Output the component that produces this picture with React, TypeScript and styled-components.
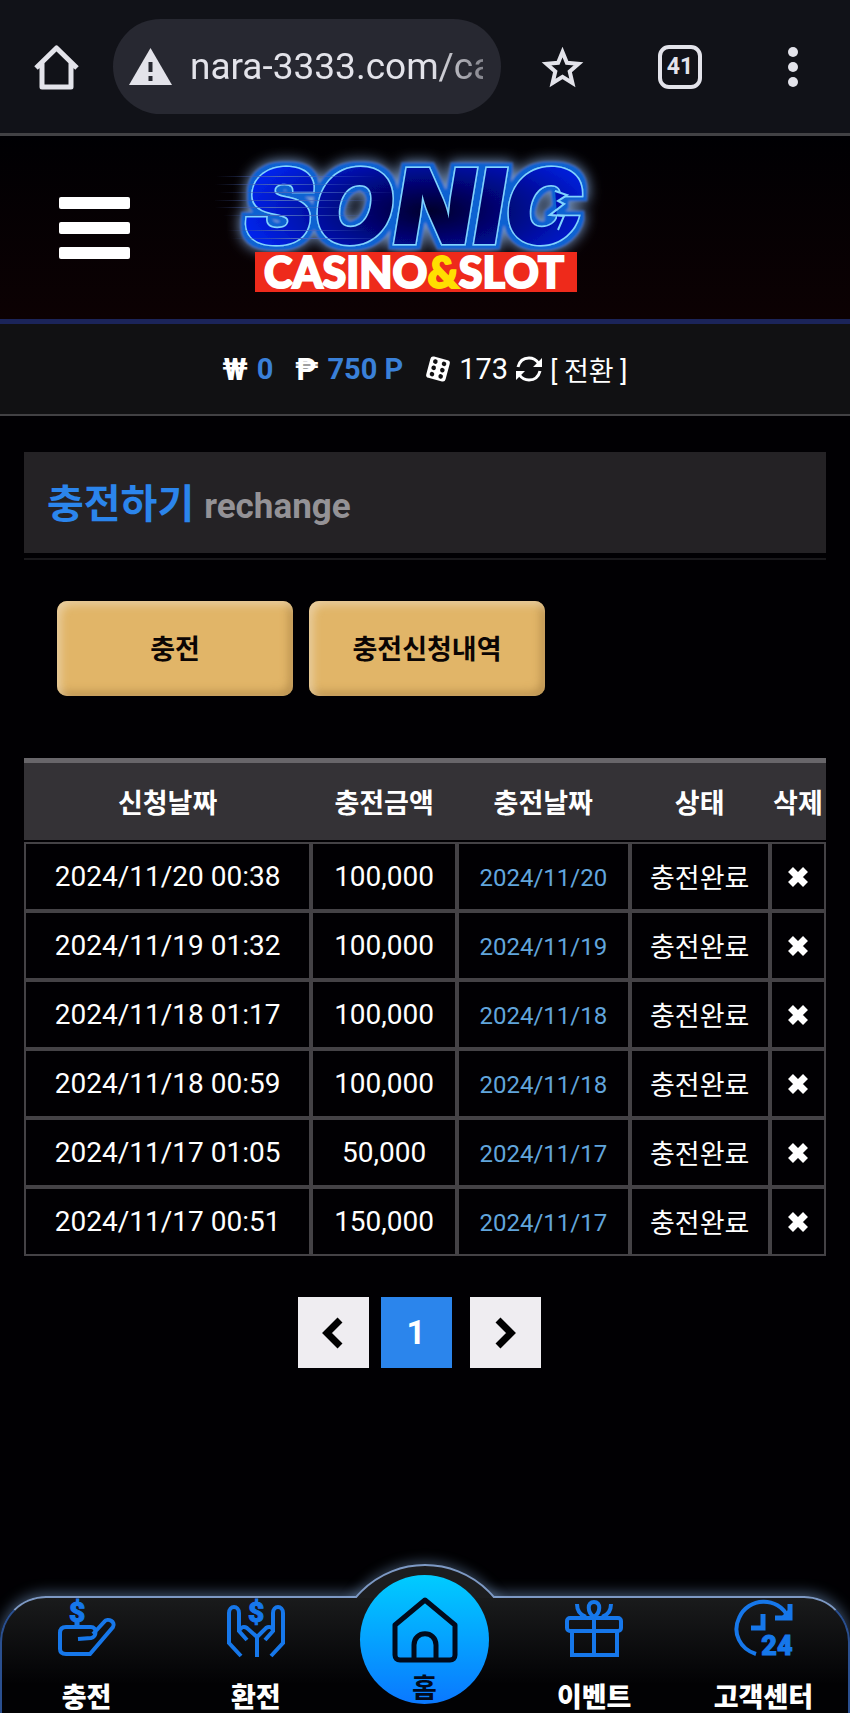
import React from 'react'
import styled, { createGlobalStyle } from 'styled-components'

const colors = {
  accent: '#2b85ec',
  icon: '#1677ea',
  border: '#444246',
  gold: '#e1b568',
  chrome: '#e3e3ea',
}

const GlobalStyle = createGlobalStyle`
  * {
    box-sizing: border-box;
  }
  body {
    margin: 0;
    background: #010003;
    color: #fff;
    font-family: Roboto, "Noto Sans CJK KR", sans-serif;
  }
  button, input {
    font-family: inherit;
    color: inherit;
    border: 0;
    padding: 0;
    background: none;
  }
  a {
    color: inherit;
    text-decoration: none;
  }
  svg {
    flex-shrink: 0;
  }
`

const Page = styled.div`
  display: flex;
  flex-direction: column;
  min-height: 100vh;
`

const IconButton = styled.button`
  display: flex;
  align-items: center;
  justify-content: center;
`

// browser bar

const BrowserBar = styled.div`
  display: flex;
  align-items: center;
  height: 136px;
  padding: 0 40px 0 34px;
  background: #111218;
  border-bottom: 3px solid #424245;
`

const AddressBox = styled.label`
  display: flex;
  align-items: center;
  gap: 18px;
  flex: 0 1 388px;
  min-width: 0;
  height: 95px;
  margin-left: 34px;
  padding: 0 18px 0 16px;
  border-radius: 48px;
  background: #272831;
`

const AddressInput = styled.input`
  flex: 1;
  width: 100%;
  min-width: 0;
  height: 50px;
  color: ${colors.chrome};
  font-size: 37px;
  mask-image: linear-gradient(to right, #000 82%, rgba(0, 0, 0, 0.5));
`

const BrowserActions = styled.div`
  display: flex;
  flex: 1;
  align-items: center;
  justify-content: space-between;
  padding-left: 40px;
`

const TabCount = styled.button`
  width: 44px;
  height: 44px;
  border: 4px solid ${colors.chrome};
  border-radius: 11px;
  color: ${colors.chrome};
  font-size: 23px;
  font-weight: 700;
`

// site header

const Header = styled.header`
  display: grid;
  grid-template-columns: 1fr auto 1fr;
  align-items: center;
  height: 188px;
  padding: 0 59px;
  background: linear-gradient(#000003, #0c0103);
  border-bottom: 5px solid #1b2459;
`

const MenuButton = styled.button`
  display: flex;
  flex-direction: column;
  gap: 13px;
  width: 71px;
`

const MenuBar = styled.span`
  display: block;
  width: 100%;
  height: 12px;
  border-radius: 2px;
  background: #fff;
`

const LogoLink = styled.a`
  display: block;
  height: 174px;
`

// balance bar

const BalanceBar = styled.div`
  display: flex;
  align-items: center;
  justify-content: center;
  height: 92px;
  background: #111113;
  border-bottom: 2px solid #424144;
  font-size: 29px;
`

const Balance = styled.span`
  display: flex;
  align-items: center;
  gap: 9px;
  margin-right: 22px;
`

const Currency = styled.span`
  font-weight: 700;
  font-size: 31px;
`

const Amount = styled.strong`
  color: #3a80d8;
`

const ConvertButton = styled.button`
  display: flex;
  align-items: center;
  gap: 8px;
  font-size: 27px;
`

const Count = styled.span`
  font-size: 29px;
`

// content

const Content = styled.main`
  padding: 36px 24px 0;
`

const TitleBar = styled.div`
  padding-bottom: 5px;
  border-bottom: 2px solid #19181b;
`

const Title = styled.h1`
  display: flex;
  align-items: baseline;
  gap: 10px;
  height: 101px;
  margin: 0;
  padding: 0 23px;
  background: #242225;
  color: ${colors.accent};
  font-size: 40px;
  line-height: 106px;
`

const SubTitle = styled.small`
  color: #949296;
  font-size: 35px;
`

const ButtonRow = styled.div`
  display: flex;
  gap: 16px;
  padding: 41px 33px 62px;
`

const GoldButton = styled.button`
  width: 236px;
  height: 95px;
  padding-bottom: 3px;
  border-radius: 10px;
  background: ${colors.gold};
  box-shadow: inset 4px 4px 8px rgba(236, 214, 175, 0.8), inset -4px -4px 8px rgba(160, 120, 60, 0.6);
  color: #0b0504;
  font-size: 27px;
  font-weight: 700;
`

const Table = styled.table`
  width: 100%;
  table-layout: fixed;
  border-collapse: separate;
  border-spacing: 0;
  text-align: center;
`

const HeadCell = styled.th<{ $width: string }>`
  width: ${({ $width }) => $width};
  height: 84px;
  padding: 0;
  background: #343236;
  border-top: 5px solid #68666a;
  border-bottom: 2px solid #010003;
  font-size: 27px;
  white-space: nowrap;
`

const Cell = styled.td`
  height: 69px;
  padding: 0;
  border: 2px solid ${colors.border};
  font-size: 28px;
`

const ChargedDate = styled.span`
  color: #61a5dc;
  font-size: 24px;
`

const Status = styled.span`
  font-size: 27px;
`

const DeleteButton = styled(IconButton)`
  margin: 0 auto;
`

const Pagination = styled.nav`
  display: flex;
  justify-content: center;
  gap: 12px;
  padding: 41px 12px 0 0;
`

const PageButton = styled.button<{ $active?: boolean }>`
  display: flex;
  align-items: center;
  justify-content: center;
  width: 71px;
  height: 71px;
  background: ${({ $active }) => ($active ? colors.accent : '#efedf1')};
  color: ${({ $active }) => ($active ? '#fff' : '#000')};
  font-size: 33px;
  font-weight: 700;
  &:last-child {
    margin-left: 6px;
  }
`

// bottom menu

const BottomNav = styled.nav`
  position: relative;
  display: grid;
  grid-template-columns: repeat(5, 1fr);
  height: 117px;
  margin-top: auto;
  border: 2px solid #7d99c4;
  border-color: #7d99c4 #2a4f8f;
  border-bottom: 0;
  border-radius: 46px 46px 0 0;
  background: linear-gradient(#1a1b1c, #020204 75%);
  box-shadow: 0 -3px 14px rgba(140, 180, 230, 0.45);
`

const Bulge = styled.div`
  position: absolute;
  top: -34px;
  left: 50%;
  width: 182px;
  height: 182px;
  margin-left: -91px;
  border: 2px solid #7d99c4;
  border-radius: 50%;
  background: #1c1d1f;
  box-shadow: 0 -3px 12px rgba(140, 180, 230, 0.35);
  clip-path: inset(-20px 0 148px 0);
`

const NavItem = styled.a`
  display: flex;
  flex-direction: column;
  align-items: center;
  gap: 17px;
  color: ${colors.icon};

  svg {
    margin-top: -3px;
  }
`

const NavLabel = styled.span`
  color: #fff;
  font-size: 27px;
  font-weight: 900;
  line-height: 40px;
  white-space: nowrap;
`

const HomeItem = styled.a`
  position: absolute;
  top: -23px;
  left: 50%;
  display: flex;
  flex-direction: column;
  align-items: center;
  gap: 6px;
  width: 129px;
  height: 129px;
  margin-left: -65px;
  padding-top: 20px;
  border-radius: 50%;
  background: linear-gradient(#00ccff, #0a78ff);
  color: #010a1c;
  font-size: 27px;
  font-weight: 700;
  line-height: 40px;
`

const rows = [
  ['2024/11/20 00:38', '100,000', '2024/11/20'],
  ['2024/11/19 01:32', '100,000', '2024/11/19'],
  ['2024/11/18 01:17', '100,000', '2024/11/18'],
  ['2024/11/18 00:59', '100,000', '2024/11/18'],
  ['2024/11/17 01:05', '50,000', '2024/11/17'],
  ['2024/11/17 00:51', '150,000', '2024/11/17'],
]

const columns = [
  { label: '신청날짜', width: '35.8%' },
  { label: '충전금액', width: '18.2%' },
  { label: '충전날짜', width: '21.5%' },
  { label: '상태', width: '17.5%' },
  { label: '삭제', width: '7%' },
]

const Logo = () => (
  <svg width="420" height="174" viewBox="0 -7 420 174">
    <defs>
      <radialGradient id="sonicFill" gradientUnits="userSpaceOnUse" cx="215" cy="70" r="190" gradientTransform="matrix(1 0 0 .4 0 35)">
        <stop offset="0" stopColor="#00002c" />
        <stop offset=".5" stopColor="#00088c" />
        <stop offset="1" stopColor="#0024ee" />
      </radialGradient>
      <filter id="glow" x="-20%" y="-40%" width="140%" height="180%">
        <feMorphology in="SourceAlpha" operator="dilate" radius="4" result="fat" />
        <feGaussianBlur in="fat" stdDeviation="1" result="edge" />
        <feFlood floodColor="#0a62d2" />
        <feComposite in2="edge" operator="in" result="rim" />
        <feGaussianBlur in="fat" stdDeviation="7" result="soft" />
        <feFlood floodColor="#86acdf" />
        <feComposite in2="soft" operator="in" result="halo" />
        <feMerge>
          <feMergeNode in="halo" />
          <feMergeNode in="rim" />
          <feMergeNode in="SourceGraphic" />
        </feMerge>
      </filter>
      <linearGradient id="speed">
        <stop offset="0" stopColor="#3a4f90" stopOpacity="0" />
        <stop offset=".4" stopColor="#4a67bd" />
        <stop offset="1" stopColor="#4a67bd" stopOpacity="0" />
      </linearGradient>
    </defs>
    <g filter="url(#glow)">
      <text x="29" y="96" fontFamily="Inter, sans-serif" fontWeight="900" fontStyle="italic" fontSize="104" fill="url(#sonicFill)" stroke="#7fd4ff" strokeWidth="3" paintOrder="stroke">SONIC</text>
      <path d="M340 43l12 4-9 6 6 3-14 11 14 1-6 14" fill="#0010b4" stroke="#7fd4ff" strokeWidth="2" />
    </g>
    <g fill="url(#speed)">
      <rect x="1" y="28" width="160" height="1" />
      <rect x="0" y="36" width="150" height="1" />
      <rect x="4" y="44" width="180" height="1" />
      <rect x="-3" y="52" width="170" height="1" />
      <rect x="0" y="59" width="140" height="1" />
      <rect x="8" y="67" width="150" height="1" />
      <rect x="12" y="82" width="140" height="1" />
      <rect x="16" y="90" width="160" height="1" />
    </g>
    <rect x="40" y="104" width="322" height="40" fill="#ee2a1b" />
    <text x="199" y="140" textAnchor="middle" fontFamily="Lato, sans-serif" fontWeight="900" fontSize="43" fill="#fff" stroke="#fff" strokeWidth="2">
      CASINO<tspan fill="#ffdf00" stroke="#ffdf00">&amp;</tspan>SLOT
    </text>
  </svg>
)

const DiceIcon = () => (
  <svg width="26" height="28" viewBox="0 0 26 28">
    <g transform="rotate(15 13 14)">
      <rect x="3" y="3" width="20" height="22" rx="3" fill="#fff" />
      <g fill="#111113">
        <circle cx="8.500" cy="7.500" r="2.300" />
        <circle cx="17.500" cy="7.500" r="2.300" />
        <circle cx="8.500" cy="14" r="2.300" />
        <circle cx="17.500" cy="14" r="2.300" />
        <circle cx="8.500" cy="20.500" r="2.300" />
        <circle cx="17.500" cy="20.500" r="2.300" />
      </g>
    </g>
  </svg>
)

const RefreshIcon = () => (
  <svg width="26" height="26" viewBox="0 0 26 26" fill="none" stroke="#fff" strokeWidth="3">
    <path d="M2 11C3.500 5 8 2 13 2c4 0 7 1.500 9.500 5" />
    <path d="M24 15c-1.500 6-6 9-11 9-4 0-7-1.500-9.500-5" />
    <path d="M26 2v9h-9zM0 24V15h9z" fill="#fff" stroke="none" />
  </svg>
)

const CloseIcon = () => (
  <svg width="20" height="20" viewBox="0 0 20 20" fill="none" stroke="#fff" strokeWidth="7">
    <path d="M2.500 2.500l15 15M17.500 2.500l-15 15" />
  </svg>
)

const DepositIcon = () => (
  <svg width="66" height="66" viewBox="-4 -4 66 66" fill="none" stroke="currentColor" strokeWidth="4">
    <text x="19" y="23" textAnchor="middle" fontFamily="Roboto, sans-serif" fontWeight="900" fontSize="28" fill="currentColor" strokeWidth="1">$</text>
    <path d="M19 23v5" strokeWidth="5" />
    <path d="M35 35L46 23c4-5 12 0 9 5L32 55H8c-4 0-6-2-6-5V34c0-4 2-6 6-6h25c6 0 6 10 0 11l-13 1" />
  </svg>
)

const WithdrawIcon = () => (
  <svg width="66" height="66" viewBox="-4 -4 66 66" fill="none" stroke="currentColor" strokeWidth="4">
    <text x="29" y="23" textAnchor="middle" fontFamily="Roboto, sans-serif" fontWeight="900" fontSize="28" fill="currentColor" strokeWidth="1">$</text>
    <path d="M14 57L2 44V14c0-8 10-8 10 0v18l8 9M44 57l12-13V14c0-8-10-8-10 0v18l-8 9" />
    <path d="M30 58V38L20 29c-3-2-6-1-7 2M30 38l9-9c3-2 6-1 7 2" />
  </svg>
)

const GiftIcon = () => (
  <svg width="66" height="66" viewBox="-4 -4 66 66" fill="none" stroke="currentColor" strokeWidth="4">
    <rect x="2" y="19" width="54" height="13" rx="3" />
    <path d="M7 32v24h45V32M29 19v37" />
    <path d="M29 18c-7-5-7-15 0-15s7 10 0 15zM12 5c0 7 3 11 9 13M46 5c0 7-3 11-9 13" />
  </svg>
)

const SupportIcon = () => (
  <svg width="66" height="66" viewBox="-4 -4 66 66" fill="none" stroke="currentColor" strokeWidth="4">
    <path d="M22 55C6 50-2 34 5 19 14-2 44-3 54 18" />
    <path d="M56 5v14H41M29 15v14H17" strokeWidth="5" />
    <path d="M46 19h10V9z" fill="currentColor" stroke="none" />
    <text x="43" y="56" textAnchor="middle" fontFamily="Roboto, sans-serif" fontWeight="900" fontSize="27" fill="currentColor" strokeWidth="1">24</text>
  </svg>
)

const navItems = [
  { label: '충전', icon: <DepositIcon /> },
  { label: '환전', icon: <WithdrawIcon /> },
  null,
  { label: '이벤트', icon: <GiftIcon /> },
  { label: '고객센터', icon: <SupportIcon /> },
]

const App = () => {
  return (
    <Page>
      <GlobalStyle />
      <BrowserBar>
        <IconButton aria-label="Home">
          <svg width="45" height="46" viewBox="0 0 45 46" fill="none" stroke={colors.chrome} strokeWidth="5">
            <path d="M2 24L22.500 4 43 24M8 19v24h29V19" strokeLinejoin="round" />
          </svg>
        </IconButton>
        <AddressBox>
          <svg width="43" height="38" viewBox="0 0 43 38">
            <path d="M21.500 0L43 37H0z" fill={colors.chrome} />
            <path d="M21.500 14v10M21.500 28v5" stroke="#272831" strokeWidth="4" />
          </svg>
          <AddressInput aria-label="Address" defaultValue="nara-3333.com/ca" />
        </AddressBox>
        <BrowserActions>
          <IconButton aria-label="Bookmark">
            <svg width="43" height="42" viewBox="0 0 43 42" fill="none" stroke={colors.chrome} strokeWidth="4">
              <path d="M21.500 6l4.400 10.800 11.600 1-8.800 7.700 2.700 11.500-9.900-6.200-9.900 6.200 2.700-11.500-8.800-7.700 11.600-1z" />
            </svg>
          </IconButton>
          <TabCount>41</TabCount>
          <IconButton aria-label="More">
            <svg width="34" height="44" viewBox="0 0 34 44" fill={colors.chrome}>
              <circle cx="17" cy="7" r="5" />
              <circle cx="17" cy="22" r="5" />
              <circle cx="17" cy="37" r="5" />
            </svg>
          </IconButton>
        </BrowserActions>
      </BrowserBar>

      <Header>
        <MenuButton aria-label="Menu">
          <MenuBar />
          <MenuBar />
          <MenuBar />
        </MenuButton>
        <LogoLink href="#">
          <Logo />
        </LogoLink>
      </Header>

      <BalanceBar>
        <Balance><Currency>₩</Currency><Amount>0</Amount></Balance>
        <Balance><Currency>₱</Currency><Amount>750 P</Amount></Balance>
        <ConvertButton>
          <DiceIcon />
          <Count>173</Count>
          <RefreshIcon />
          [ 전환 ]
        </ConvertButton>
      </BalanceBar>

      <Content>
        <TitleBar>
          <Title>충전하기<SubTitle>rechange</SubTitle></Title>
        </TitleBar>
        <ButtonRow>
          <GoldButton>충전</GoldButton>
          <GoldButton>충전신청내역</GoldButton>
        </ButtonRow>
        <Table>
          <thead>
            <tr>
              {columns.map((col) => (
                <HeadCell key={col.label} $width={col.width}>{col.label}</HeadCell>
              ))}
            </tr>
          </thead>
          <tbody>
            {rows.map(([requested, amount, charged]) => (
              <tr key={requested}>
                <Cell>{requested}</Cell>
                <Cell>{amount}</Cell>
                <Cell><ChargedDate>{charged}</ChargedDate></Cell>
                <Cell><Status>충전완료</Status></Cell>
                <Cell>
                  <DeleteButton aria-label="Delete"><CloseIcon /></DeleteButton>
                </Cell>
              </tr>
            ))}
          </tbody>
        </Table>
        <Pagination>
          <PageButton aria-label="Previous">
            <svg width="22" height="32" viewBox="0 0 22 32" fill="none" stroke="#000" strokeWidth="7">
              <path d="M18 3L5 16l13 13" />
            </svg>
          </PageButton>
          <PageButton $active>1</PageButton>
          <PageButton aria-label="Next">
            <svg width="22" height="32" viewBox="0 0 22 32" fill="none" stroke="#000" strokeWidth="7">
              <path d="M4 3l13 13L4 29" />
            </svg>
          </PageButton>
        </Pagination>
      </Content>

      <BottomNav>
        <Bulge />
        {navItems.map((item, i) =>
          item ? (
            <NavItem key={item.label} href="#">
              {item.icon}
              <NavLabel>{item.label}</NavLabel>
            </NavItem>
          ) : (
            <span key={i} />
          )
        )}
        <HomeItem href="#">
          <svg width="66" height="68" viewBox="0 0 66 68" fill="none" stroke="currentColor" strokeWidth="5" strokeLinejoin="round">
            <path d="M3 30L33 5l30 25v30c0 3-2 5-5 5H8c-3 0-5-2-5-5z" />
            <path d="M22 65V50c0-15 22-15 22 0v15" />
          </svg>
          홈
        </HomeItem>
      </BottomNav>
    </Page>
  )
}

export default App
